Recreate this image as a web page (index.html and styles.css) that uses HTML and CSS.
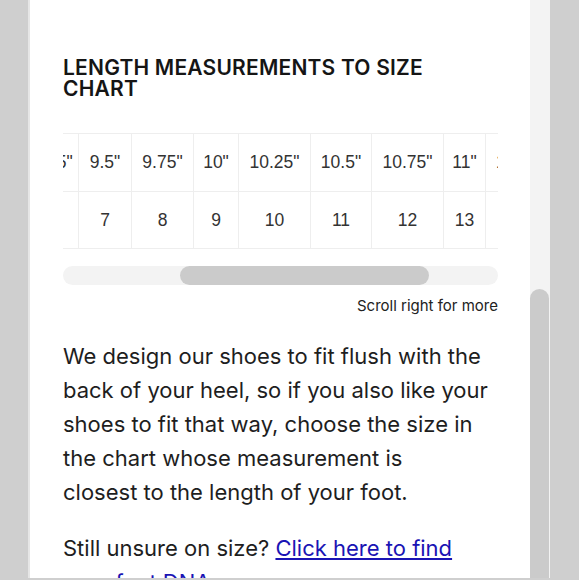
FILE: index.html
```html
<!DOCTYPE html>
<html lang="en">
<head>
<meta charset="utf-8">
<title>Size chart</title>
<link rel="stylesheet" href="styles.css">
</head>
<body>
<div class="modal">
  <div class="content">
    <h2 class="title">LENGTH MEASUREMENTS TO SIZE CHART</h2>
    <div class="scroller">
      <div class="chart">
        <div class="cell">9.25"</div>
        <div class="cell">9.5"</div>
        <div class="cell">9.75"</div>
        <div class="cell">10"</div>
        <div class="cell">10.25"</div>
        <div class="cell">10.5"</div>
        <div class="cell">10.75"</div>
        <div class="cell">11"</div>
        <div class="cell">11.25"</div>
        <div class="cell row2">6</div>
        <div class="cell row2">7</div>
        <div class="cell row2">8</div>
        <div class="cell row2">9</div>
        <div class="cell row2">10</div>
        <div class="cell row2">11</div>
        <div class="cell row2">12</div>
        <div class="cell row2">13</div>
        <div class="cell row2">14</div>
      </div>
    </div>
    <div class="track"><div class="thumb"></div></div>
    <p class="hint">Scroll right for more</p>
    <p class="copy first">We design our shoes to fit flush with the back of your heel, so if you also like your shoes to fit that way, choose the size in the chart whose measurement is<br>closest to the length of your foot.</p>
    <p class="copy">Still unsure on size? <a href="#">Click here to find your foot DNA.</a></p>
  </div>
  <div class="vscroll"><div class="vthumb"></div></div>
</div>
</body>
</html>
```
FILE: styles.css
```css
html, body {
  margin: 0;
  padding: 0;
  height: 100%;
  overflow: hidden;
  background: #cfcfcf;
}
.modal {
  display: flex;
  margin-left: 28px;
  width: 522px;
  height: 578px;
  border-left: 2px solid #e6e6e6;
  background: #ffffff;
  box-sizing: border-box;
}
.content {
  flex: 1;
  padding: 0 32px 0 33px;
  overflow: hidden;
  min-width: 0;
}
.title {
  margin: 57px 0 0 0;
  max-width: 390px;
  font-family: Inter, "Liberation Sans", sans-serif;
  font-weight: 600;
  font-size: 21px;
  line-height: 21px;
  letter-spacing: 0.2px;
  color: #151515;
}
.scroller {
  margin-top: 34px;
  overflow: hidden;
}
.chart {
  display: grid;
  width: max-content;
  grid-template-columns: 52px 53px 62px 45px 72px 61px 72px 42px auto;
  grid-template-rows: 58px 57px;
  margin-left: -36px;
  border-top: 1px solid #eeeeee;
  font-family: "Liberation Sans", Arial, sans-serif;
  font-size: 17.5px;
  color: #333333;
}
.cell {
  display: flex;
  align-items: center;
  justify-content: center;
  padding: 0 10px;
  border-right: 1px solid #eeeeee;
  border-bottom: 1px solid #eeeeee;
  box-sizing: border-box;
  white-space: nowrap;
}
.track {
  margin-top: 17px;
  height: 19px;
  border-radius: 10px;
  background: #f3f3f3;
  padding-left: 117px;
}
.thumb {
  width: 249px;
  height: 19px;
  border-radius: 10px;
  background: #cbcbcb;
}
.hint {
  margin: 11px 0 0 0;
  text-align: right;
  font-family: Inter, "Noto Sans", sans-serif;
  font-size: 15px;
  line-height: 20px;
  color: #222222;
}
.copy {
  margin: 22px 0 0 0;
  font-family: Inter, "Noto Sans", sans-serif;
  font-size: 22px;
  line-height: 34px;
  color: #1e1e1e;
}
.copy.first {
  margin-top: 23px;
}
.copy a {
  color: #1a14b4;
  text-decoration: underline;
}
.vscroll {
  width: 20px;
  background: #f3f3f3;
  display: flex;
  flex-direction: column;
  flex-shrink: 0;
}
.vthumb {
  margin-top: 289px;
  flex: 1;
  width: 19px;
  border-radius: 10px 10px 0 0;
  background: #cbcbcb;
}
```
